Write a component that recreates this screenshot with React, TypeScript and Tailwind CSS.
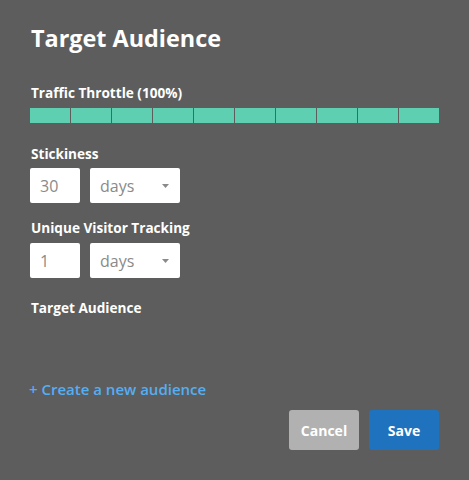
import React from 'react';

const Label: React.FC<{ children: React.ReactNode; className?: string }> = ({ children, className = '' }) => (
  <div className={`text-[13.6px] leading-[19px] font-bold text-white ${className}`}>{children}</div>
);

const DurationRow: React.FC<{ value: string }> = ({ value }) => (
  <div className="flex gap-[10px] h-[35px]">
    <div className="w-[50px] bg-white rounded-[2px] flex items-center pl-[10px] text-[16px] text-[#8a8a8a]">
      {value}
    </div>
    <div className="w-[90px] bg-white rounded-[2px] flex items-center justify-between pl-[10px] pr-[11px] text-[16px] text-[#8a8a8a]">
      <span>days</span>
      <svg width="7" height="4" viewBox="0 0 7 4">
        <path d="M0 0 L7 0 L3.5 4 Z" fill="#8a8a8a" />
      </svg>
    </div>
  </div>
);

export default function App() {
  const segments = Array.from({ length: 10 });

  return (
    <div
      className="w-[469px] h-[480px] bg-[#5d5d5d] pl-[30px] pr-[30px] pt-[22px] flex flex-col"
      style={{ fontFamily: '"Open Sans", sans-serif' }}
    >
      <h1 className="text-[23.4px] leading-[33px] font-bold text-white pl-[1px]">Target Audience</h1>

      <Label className="mt-[28px] pl-[1px]">Traffic Throttle (100%)</Label>
      <div className="mt-[6px] flex gap-[1px] w-[409px] h-[15px]">
        {segments.map((_, i) => (
          <div key={i} className="flex-1 bg-[#5fcfb2]" />
        ))}
      </div>

      <Label className="mt-[21px] pl-[1px]">Stickiness</Label>
      <div className="mt-[5px]">
        <DurationRow value="30" />
      </div>

      <Label className="mt-[15px] pl-[1px]">Unique Visitor Tracking</Label>
      <div className="mt-[6px]">
        <DurationRow value="1" />
      </div>

      <Label className="mt-[20px] pl-[1px]">Target Audience</Label>

      <div className="mt-[62px] text-[15px] leading-[20px] font-semibold text-[#56aef2] -ml-[1px]">
        + Create a new audience
      </div>

      <div className="mt-[11px] flex justify-end gap-[10px]">
        <button className="w-[70px] h-[40px] rounded-[3px] bg-[#b1b1b1] text-white text-[14px] font-bold">
          Cancel
        </button>
        <button className="w-[70px] h-[40px] rounded-[3px] bg-[#1f72bd] text-white text-[14px] font-bold">
          Save
        </button>
      </div>
    </div>
  );
}
